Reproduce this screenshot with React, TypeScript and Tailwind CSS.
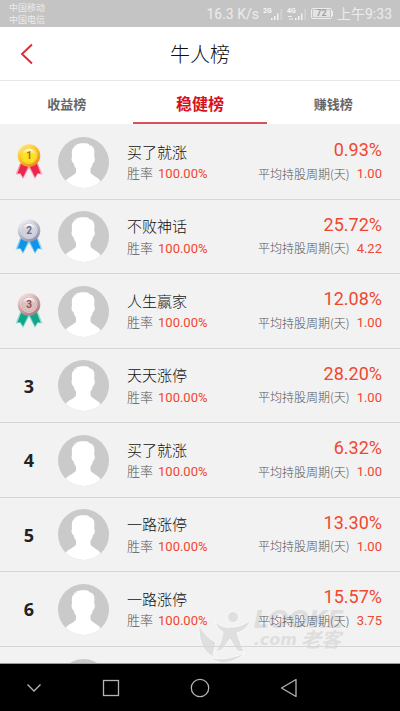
import { useState } from 'react'

interface Trader {
  name: string
  winRate: string
  profit: string
  days: string
}

interface MedalTheme {
  light: string
  mid: string
  dark: string
  face: string
  ribbon: string
  ribbonEdge: string
  digit: string
}

const tabs = ['收益榜', '稳健榜', '赚钱榜']

const traders: Trader[] = [
  { name: '买了就涨', winRate: '100.00%', profit: '0.93%',  days: '1.00' },
  { name: '不败神话', winRate: '100.00%', profit: '25.72%', days: '4.22' },
  { name: '人生赢家', winRate: '100.00%', profit: '12.08%', days: '1.00' },
  { name: '天天涨停', winRate: '100.00%', profit: '28.20%', days: '1.00' },
  { name: '买了就涨', winRate: '100.00%', profit: '6.32%',  days: '1.00' },
  { name: '一路涨停', winRate: '100.00%', profit: '13.30%', days: '1.00' },
  { name: '一路涨停', winRate: '100.00%', profit: '15.57%', days: '3.75' },
]

const medals: MedalTheme[] = [
  { light: '#ffe98a', mid: '#fbc21c', dark: '#e58a10', face: '#ffe21f', ribbon: '#ee2450', ribbonEdge: '#f8a0b2', digit: '#b5651d' },
  { light: '#f4f4fa', mid: '#bfc0cf', dark: '#8a8aa5', face: '#d3d3df', ribbon: '#0f94e8', ribbonEdge: '#8fd4f8', digit: '#6b6b80' },
  { light: '#f6e6e6', mid: '#cfa9ab', dark: '#a2777b', face: '#dcc0c0', ribbon: '#12a58e', ribbonEdge: '#93dccf', digit: '#8f4f54' },
]

export default function App() {
  const [active, setActive] = useState(1)

  return (
    <div className="relative flex h-screen flex-col overflow-hidden bg-[#f2f2f2] font-[Roboto,'Noto_Sans_CJK_SC',sans-serif]">
      <StatusBar />

      {/* Title bar */}
      <header className="grid h-[54px] shrink-0 grid-cols-[1fr_auto_1fr] items-center border-b border-[#e8e8e8] bg-white">
        <button type="button" aria-label="返回" className="justify-self-start py-4 pr-4 pl-5">
          <svg width="14" height="22" viewBox="0 0 14 22" fill="none" stroke="#dc2b35" strokeWidth="1.9">
            <path d="M12 1.500 2 11l10 9.500" />
          </svg>
        </button>
        <h1 className="pt-0.5 text-xl font-light text-[#111]">牛人榜</h1>
      </header>

      {/* Tabs */}
      <nav className="grid h-[44px] shrink-0 grid-cols-3 border-b border-[#f2f2f2] bg-white">
        {tabs.map((tab, i) => (
          <button
            key={tab}
            type="button"
            onClick={() => setActive(i)}
            className={`border-b-2 pt-1.5 font-bold ${
              i === active ? 'border-[#d9505a] text-base text-[#d6101f]' : 'border-transparent text-[13px] text-[#666]'
            }`}
          >
            {tab}
          </button>
        ))}
      </nav>

      <Watermark />

      {/* Ranking */}
      <ul className="relative min-h-0 flex-1 overflow-hidden border-b border-[#999]">
        {traders.map((t, i) => <TraderRow key={i} trader={t} index={i} />)}
        {/* Next entry, still loading */}
        <li className="flex h-[74px] items-center pl-[58px]">
          <Avatar />
        </li>
      </ul>

      <NavBar />
    </div>
  )
}

function StatusBar() {
  return (
    <div className="flex h-[27px] shrink-0 items-center justify-between bg-[#c4c4c4] pr-2 pl-[9px] text-[#ececec]">
      <div className="text-[9px] leading-3">
        <div>中国移动</div>
        <div>中国电信</div>
      </div>
      <div className="flex items-center text-sm">
        <span>16.3 K/s</span>
        <Signal label="2G" />
        <Signal label="4G" />
        <span className="ml-1 flex items-center">
          <span className="flex h-[11px] w-[21px] items-center justify-center rounded-xs border border-[#ececec]">
            <span className="flex h-[7px] w-[17px] items-center justify-center bg-[#e4e4e4] text-[9px] font-bold text-[#a0a0a0]">72</span>
          </span>
          <span className="h-[5px] w-px bg-[#ececec]" />
        </span>
        <span className="ml-1 whitespace-nowrap">上午9:33</span>
      </div>
    </div>
  )
}

function Signal({ label }: { label: string }) {
  return (
    <span className="ml-1 flex">
      <svg width="20" height="14" viewBox="0 0 20 14">
        <text x="0" y="6" fontSize="7" fontWeight="700" fill="#f4f4f4">{label}</text>
        {label === '4G' && <path d="M1 9.500h4M2 12h4" stroke="#ececec" />}
        <path d="M8 11h1.500v2H8zM11 9h1.500v4H11zM14 6.500h1.500v6.500h-1.500z" fill="#f4f4f4" />
        <path d="M17.500 2H19v11h-1.500z" fill="#d4d4d4" />
      </svg>
    </span>
  )
}

function TraderRow({ trader, index }: { trader: Trader; index: number }) {
  return (
    <li className="flex items-center border-b border-[#d6d6d6] pr-[18px] odd:h-[75px] even:h-[74px]">
      <div className="flex w-[58px] shrink-0 justify-center">
        {index < 3 ? (
          <Medal theme={medals[index]} rank={index + 1} />
        ) : (
          <span className="font-['Open_Sans',sans-serif] text-lg font-bold text-[#222]">{index}</span>
        )}
      </div>
      <Avatar />
      <div className="ml-[18px] flex min-w-0 flex-1 flex-col">
        <div className="flex h-6 items-center justify-between">
          <span className="pt-1.5 text-[15px] font-light text-[#111]">{trader.name}</span>
          <span className="text-lg text-[#f0472f]">{trader.profit}</span>
        </div>
        <div className="flex h-6 items-center justify-between whitespace-nowrap text-[#555]">
          <span className="flex items-center gap-[5px] text-[13px] font-light">
            胜率
            <span className="font-normal text-[#f0472f]">{trader.winRate}</span>
          </span>
          <span className="flex items-center gap-[7px] font-['Noto_Sans_CJK_SC',sans-serif] text-xs font-light">
            平均持股周期(天)
            <span className="font-[Roboto,sans-serif] text-[13px] font-normal text-[#f0472f]">{trader.days}</span>
          </span>
        </div>
      </div>
    </li>
  )
}

function Medal({ theme, rank }: { theme: MedalTheme; rank: number }) {
  const rim = `rim-${rank}`
  const face = `face-${rank}`
  return (
    <svg width="28" height="36" viewBox="0 0 28 36">
      <defs>
        <linearGradient id={rim} x1="0.2" y1="0" x2="0.8" y2="1">
          <stop offset="0" stopColor={theme.light} />
          <stop offset="0.45" stopColor={theme.mid} />
          <stop offset="1" stopColor={theme.dark} />
        </linearGradient>
        <linearGradient id={face} x1="0" y1="0" x2="0" y2="1">
          <stop offset="0" stopColor="#fff" />
          <stop offset="0.4" stopColor={theme.face} />
          <stop offset="1" stopColor={theme.face} />
        </linearGradient>
      </defs>
      <path d="M5 19 .5 30.500l4.500-.5 3 5L14 24l6 11 3-5 4.500.5L23 19z" fill={theme.ribbonEdge} />
      <path d="M6 20 2.500 29.500l3-.3 2.500 4L13 23l-4-4zM22 20l3.500 9.500-3-.3-2.500 4L15 23l4-4z" fill={theme.ribbon} />
      <circle cx="14" cy="11.500" r="11.300" fill={`url(#${rim})`} />
      <circle cx="14" cy="11.500" r="8" fill={theme.mid} stroke={theme.light} strokeWidth="0.600" />
      <circle cx="14" cy="11.500" r="7" fill={`url(#${face})`} />
      <text x="14" y="15" textAnchor="middle" fontSize="10" fontWeight="700" fill={theme.digit}>{rank}</text>
    </svg>
  )
}

function Avatar() {
  return (
    <svg className="shrink-0" width="51" height="51" viewBox="0 0 51 51">
      <defs>
        <clipPath id="avatar-clip"><circle cx="25.500" cy="25.500" r="25.500" /></clipPath>
      </defs>
      <g clipPath="url(#avatar-clip)">
        <path d="M0 0h51v51H0z" fill="#cacaca" />
        <path
          d="M18 31.500c-1.500-1.500-2-3.500-2.500-5.500-1.800-.5-2.500-5-1.500-6-.3-4-.5-7.500 1.500-9.500l1.500-.5c-.8-.5-1-1-1-1.500l3 .3-1-1c2-1 4-1.500 6.500-1.500 3-.3 6.500-.2 7 1.900 3 .3 4.500 2.300 4.800 5.300.2 2.500 0 4.500-.1 6.500 1.300.8.6 5.500-1.200 6-.5 2-1 4-2.500 5.500v4c1 2.500 7 4.500 10 8.500L38 51H13l-5.500-7c3-4 9.500-6 10.500-8.500z"
          fill="#fff"
        />
      </g>
    </svg>
  )
}

function Watermark() {
  return (
    <div aria-hidden="true" className="pointer-events-none absolute right-[56px] bottom-[49px] flex items-start gap-1">
      <svg width="52" height="52" viewBox="0 0 52 52" fill="#dfdfdf" stroke="#f9f9f9" strokeWidth="1">
        <path d="M1 14c4 9 10 15 17 18l-3 13 5 3C7 46 0 33 1 14z" />
        <path d="M14 48c9 2 21 0 33-5-8 8-20 12-29 8-3-1-5-2-4-3z" />
        <path d="M17 11c4 5 10 7 16 6 7 0 13-2 20-7-3 7-8 11-14 13l7 19-7-1-7-12-8 11-7 2c5-7 7-13 8-20-4-2-7-6-8-11z" />
        <circle cx="35" cy="7" r="5.500" />
      </svg>
      <div className="font-['DejaVu_Sans','Noto_Sans_CJK_SC',sans-serif] font-bold whitespace-nowrap text-[#dedede] italic">
        <div className="text-2xl leading-5">LOOKE</div>
        <div className="flex items-center leading-5">
          <span className="text-base leading-5">.com</span>
          <span className="ml-1 text-xl leading-5">老客</span>
        </div>
      </div>
    </div>
  )
}

function NavBar() {
  return (
    <footer className="flex h-[47px] shrink-0 items-center bg-black pr-[67px]">
      <div className="grid w-full grid-cols-[67px_1fr_1fr_1fr] items-center justify-items-center">
        <button type="button" aria-label="收起">
          <svg width="16" height="16" viewBox="0 0 16 16" fill="none" stroke="#b4b4b4" strokeWidth="1.300"><path d="m1.500 4.500 6.500 6.500 6.500-6.500" /></svg>
        </button>
        <button type="button" aria-label="最近任务">
          <svg width="18" height="18" viewBox="0 0 18 18" fill="none" stroke="#b4b4b4" strokeWidth="1.300"><rect x="1.500" y="1.500" width="15" height="15" /></svg>
        </button>
        <button type="button" aria-label="主页">
          <svg width="20" height="20" viewBox="0 0 20 20" fill="none" stroke="#b4b4b4" strokeWidth="1.300"><circle cx="10" cy="10" r="8.700" /></svg>
        </button>
        <button type="button" aria-label="返回">
          <svg width="18" height="20" viewBox="0 0 18 20" fill="none" stroke="#b4b4b4" strokeWidth="1.300" strokeLinejoin="round"><path d="M16 1.500v17L1.500 10z" /></svg>
        </button>
      </div>
    </footer>
  )
}
